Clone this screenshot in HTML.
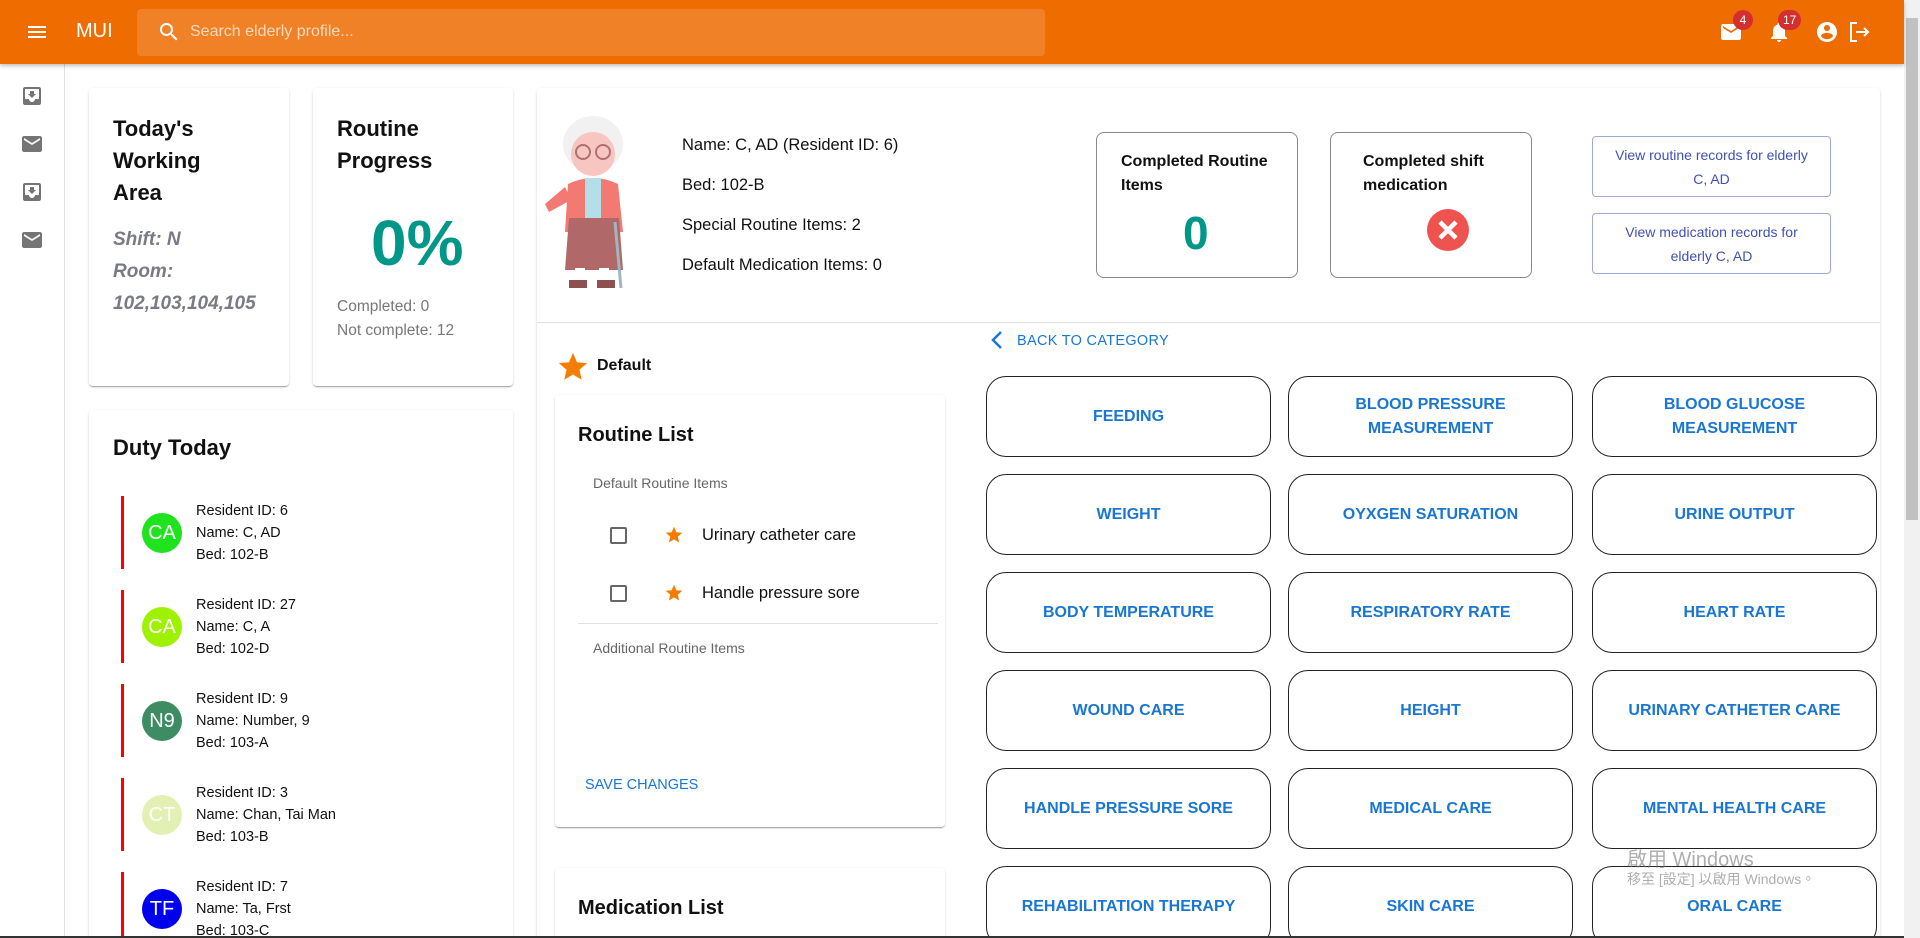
<!DOCTYPE html>
<html style="height:938px;overflow:hidden"><head><meta charset="utf-8"><style>
*{box-sizing:border-box;margin:0;padding:0}
body{width:1920px;height:938px;overflow:hidden;background:#fff;font-family:"Liberation Sans",Arial,sans-serif;position:relative;color:#111}
.abs{position:absolute}
.hdr{left:0;top:0;width:1904px;height:64px;background:#ee6c00;box-shadow:0 2px 4px rgba(0,0,0,.25);z-index:5}
.card{position:absolute;background:#fff;border-radius:4px;box-shadow:0 2px 1px -1px rgba(0,0,0,.2),0 1px 1px rgba(0,0,0,.14),0 1px 3px rgba(0,0,0,.12)}
.t{position:absolute;white-space:nowrap}
.cat{position:absolute;width:285px;height:81px;border:1px solid #222;border-radius:20px;display:flex;align-items:center;justify-content:center;text-align:center;color:#1976d2;font-weight:bold;font-size:16px;line-height:24px}
.duty{position:absolute;left:121px;width:300px;height:73px;border-left:3px solid #f00}
.av{position:absolute;left:18px;top:17px;width:40px;height:40px;border-radius:50%;color:#fff;font-size:20px;display:flex;align-items:center;justify-content:center}
.dt{position:absolute;left:72px;top:4px;font-size:14.5px;line-height:22px}
.badge{position:absolute;background:#d32f2f;color:#fff;border-radius:10px;font-size:12px;height:20px;min-width:20px;text-align:center;line-height:20px;padding:0 5px}
.btn2{position:absolute;left:1592px;width:239px;border:1px solid rgba(63,81,181,.5);border-radius:4px;color:#3f51b5;font-size:14px;line-height:24px;text-align:center;display:flex;align-items:center;justify-content:center}
</style></head><body>
<div class="abs" style="left:0;top:0;width:1920px;height:938px;overflow:hidden">

<div class="abs hdr">
  <svg class="abs" style="left:25px;top:20px" width="24" height="24" viewBox="0 0 24 24"><path fill="#fff" d="M3 18h18v-2H3v2zm0-5h18v-2H3v2zm0-7v2h18V6H3z"/></svg>
  <div class="t" style="left:76px;top:20px;color:#fff;font-size:20px">MUI</div>
  <div class="abs" style="left:137px;top:9px;width:908px;height:47px;background:rgba(255,255,255,.15);border-radius:4px"></div>
  <svg class="abs" style="left:157px;top:20px" width="24" height="24" viewBox="0 0 24 24"><path fill="#fff" d="M15.5 14h-.79l-.28-.27A6.470 6.470 0 0016 9.5 6.5 6.5 0 109.5 16c1.61 0 3.090-.59 4.230-1.570l.27.28v.79l5 4.99L20.49 19l-4.99-5zm-6 0C7.01 14 5 11.99 5 9.5S7.01 5 9.5 5 14 7.01 14 9.5 11.99 14 9.5 14z"/></svg>
  <div class="t" style="left:190px;top:23px;color:rgba(255,255,255,.7);font-size:16px">Search elderly profile...</div>
  <svg class="abs" style="left:1719px;top:20px" width="24" height="24" viewBox="0 0 24 24"><path fill="#fff" d="M20 4H4c-1.1 0-2 .9-2 2v12c0 1.1.9 2 2 2h16c1.1 0 2-.9 2-2V6c0-1.1-.9-2-2-2zm0 4l-8 5-8-5V6l8 5 8-5v2z"/></svg>
  <div class="badge" style="left:1733px;top:10px">4</div>
  <svg class="abs" style="left:1767px;top:20px" width="24" height="24" viewBox="0 0 24 24"><path fill="#fff" d="M12 22c1.1 0 2-.9 2-2h-4c0 1.1.89 2 2 2zm6-6v-5c0-3.07-1.64-5.64-4.5-6.32V4c0-.83-.67-1.5-1.5-1.5s-1.5.67-1.5 1.5v.68C7.63 5.36 6 7.92 6 11v5l-2 2v1h16v-1l-2-2z"/></svg>
  <div class="badge" style="left:1778px;top:10px">17</div>
  <svg class="abs" style="left:1815px;top:20px" width="24" height="24" viewBox="0 0 24 24"><path fill="#fff" d="M12 2C6.48 2 2 6.48 2 12s4.48 10 10 10 10-4.48 10-10S17.52 2 12 2zm0 3c1.66 0 3 1.34 3 3s-1.34 3-3 3-3-1.34-3-3 1.34-3 3-3zm0 14.2c-2.5 0-4.71-1.28-6-3.22.03-1.99 4-3.08 6-3.08 1.99 0 5.97 1.09 6 3.08-1.29 1.940-3.5 3.220-6 3.220z"/></svg>
  <svg class="abs" style="left:1847px;top:20px" width="24" height="24" viewBox="0 0 24 24" fill="none" stroke="#fff" stroke-width="2"><path d="M10 3H4v18h6"/><path d="M9 12h12M17 8l4 4-4 4"/></svg>
</div>

<div class="abs" style="left:0;top:64px;width:65px;height:874px;border-right:1px solid #e0e0e0"></div>
<svg class="abs" style="left:20px;top:84px" width="24" height="24" viewBox="0 0 24 24"><path fill="#757575" d="M19 3H4.99C3.88 3 3 3.9 3 5v14c0 1.1.88 2 1.990 2H19c1.1 0 2-.9 2-2V5c0-1.1-.9-2-2-2zm0 12h-4c0 1.66-1.35 3-3 3s-3-1.34-3-3H4.99V5H19v10zm-3-5h-2V7h-4v3H8l4 4 4-4z"/></svg>
<svg class="abs" style="left:20px;top:132px" width="24" height="24" viewBox="0 0 24 24"><path fill="#757575" d="M20 4H4c-1.1 0-2 .9-2 2v12c0 1.1.9 2 2 2h16c1.1 0 2-.9 2-2V6c0-1.1-.9-2-2-2zm0 4l-8 5-8-5V6l8 5 8-5v2z"/></svg>
<svg class="abs" style="left:20px;top:180px" width="24" height="24" viewBox="0 0 24 24"><path fill="#757575" d="M19 3H4.99C3.88 3 3 3.9 3 5v14c0 1.1.88 2 1.990 2H19c1.1 0 2-.9 2-2V5c0-1.1-.9-2-2-2zm0 12h-4c0 1.66-1.35 3-3 3s-3-1.34-3-3H4.99V5H19v10zm-3-5h-2V7h-4v3H8l4 4 4-4z"/></svg>
<svg class="abs" style="left:20px;top:228px" width="24" height="24" viewBox="0 0 24 24"><path fill="#757575" d="M20 4H4c-1.1 0-2 .9-2 2v12c0 1.1.9 2 2 2h16c1.1 0 2-.9 2-2V6c0-1.1-.9-2-2-2zm0 4l-8 5-8-5V6l8 5 8-5v2z"/></svg>

<div class="card" style="left:89px;top:88px;width:200px;height:298px">
  <div class="abs" style="left:24px;top:25px;font-size:22px;font-weight:bold;line-height:32px">Today's<br>Working<br>Area</div>
  <div class="abs" style="left:24px;top:136px;font-size:19px;font-weight:bold;font-style:italic;line-height:32px;color:#7a7a86">Shift: N<br>Room:<br>102,103,104,105</div>
</div>
<div class="card" style="left:313px;top:88px;width:200px;height:298px">
  <div class="abs" style="left:24px;top:25px;font-size:22px;font-weight:bold;line-height:32px">Routine<br>Progress</div>
  <div class="t" style="left:58px;top:118px;font-size:64px;font-weight:bold;color:#009688">0%</div>
  <div class="abs" style="left:24px;top:207px;font-size:15.5px;line-height:24px;color:#777">Completed: 0<br>Not complete: 12</div>
</div>

<div class="card" style="left:89px;top:410px;width:424px;height:540px">
  <div class="t" style="left:24px;top:25px;font-size:22px;font-weight:bold">Duty Today</div>
</div>
<div class="duty" style="top:496px"><div class="av" style="background:#1ee31e">CA</div><div class="dt">Resident ID: 6<br>Name: C, AD<br>Bed: 102-B</div></div>
<div class="duty" style="top:590px"><div class="av" style="background:#9ef200">CA</div><div class="dt">Resident ID: 27<br>Name: C, A<br>Bed: 102-D</div></div>
<div class="duty" style="top:684px"><div class="av" style="background:#3d8c63">N9</div><div class="dt">Resident ID: 9<br>Name: Number, 9<br>Bed: 103-A</div></div>
<div class="duty" style="top:778px"><div class="av" style="background:#e3f0b3">CT</div><div class="dt">Resident ID: 3<br>Name: Chan, Tai Man<br>Bed: 103-B</div></div>
<div class="duty" style="top:872px"><div class="av" style="background:#0000ee">TF</div><div class="dt">Resident ID: 7<br>Name: Ta, Frst<br>Bed: 103-C</div></div>

<div class="card" style="left:537px;top:88px;width:1343px;height:870px"></div>
<svg class="abs" style="left:543px;top:112px" width="100" height="180" viewBox="0 0 100 180">
  <ellipse cx="50" cy="32" rx="30" ry="28" fill="#f1f1f1"/>
  <ellipse cx="50" cy="42" rx="22" ry="22" fill="#f7c6c0"/>
  <circle cx="40" cy="40" r="7" fill="none" stroke="#b07070" stroke-width="2"/>
  <circle cx="60" cy="40" r="7" fill="none" stroke="#b07070" stroke-width="2"/>
  <path d="M25 72 Q50 60 75 72 L80 120 L22 120 Z" fill="#f27a73"/>
  <rect x="42" y="66" width="16" height="40" fill="#b3dfe8"/>
  <path d="M22 75 L2 92 L6 100 L28 88Z" fill="#f27a73"/>
  <path d="M26 106 L76 106 L80 158 L22 158 Z" fill="#b06868"/>
  <line x1="72" y1="110" x2="78" y2="176" stroke="#9fb6c1" stroke-width="3"/>
  <rect x="32" y="156" width="10" height="12" fill="#fff"/><rect x="56" y="156" width="10" height="12" fill="#fff"/>
  <path d="M26 168h18v8H26zM54 168h18v8H54z" fill="#8c5050"/>
</svg>
<div class="abs" style="left:682px;top:125px;font-size:16.5px;line-height:40px">Name: C, AD (Resident ID: 6)<br>Bed: 102-B<br>Special Routine Items: 2<br>Default Medication Items: 0</div>

<div class="abs" style="left:1096px;top:132px;width:202px;height:146px;border:1px solid #888;border-radius:8px">
  <div class="abs" style="left:24px;top:17px;font-size:16px;font-weight:bold;line-height:24px">Completed Routine<br>Items</div>
  <div class="t" style="left:86px;top:73px;font-size:46px;font-weight:bold;color:#009688">0</div>
</div>
<div class="abs" style="left:1330px;top:132px;width:202px;height:146px;border:1px solid #888;border-radius:8px">
  <div class="abs" style="left:32px;top:17px;font-size:16px;font-weight:bold;line-height:24px">Completed shift<br>medication</div>
  <svg class="abs" style="left:96px;top:76px" width="42" height="42" viewBox="0 0 42 42"><circle cx="21" cy="21" r="21" fill="#ef5350"/><path d="M13 13L29 29M29 13L13 29" stroke="#fff" stroke-width="4.5"/></svg>
</div>
<div class="btn2" style="top:136px;height:61px">View routine records for elderly<br>C, AD</div>
<div class="btn2" style="top:213px;height:61px">View medication records for<br>elderly C, AD</div>

<div class="abs" style="left:537px;top:322px;width:1343px;height:1px;background:#e0e0e0"></div>

<svg class="abs" style="left:988px;top:328px" width="18" height="24" viewBox="0 0 18 24"><path d="M13 4L5 12l8 8" fill="none" stroke="#1976d2" stroke-width="2.5"/></svg>
<div class="t" style="left:1017px;top:333px;font-size:14.5px;color:#1976d2;letter-spacing:.3px">BACK TO CATEGORY</div>

<svg class="abs" style="left:556px;top:350px" width="34" height="34" viewBox="0 0 24 24"><path fill="#f57c00" d="M12 17.27L18.18 21l-1.64-7.03L22 9.24l-7.19-.61L12 2 9.19 8.63 2 9.24l5.46 4.73L5.82 21z"/></svg>
<div class="t" style="left:597px;top:357px;font-size:16px;font-weight:bold">Default</div>

<div class="card" style="left:555px;top:395px;width:390px;height:432px">
  <div class="t" style="left:23px;top:29px;font-size:20px;font-weight:bold">Routine List</div>
  <div class="t" style="left:38px;top:80px;font-size:14px;color:#666">Default Routine Items</div>
  <div class="abs" style="left:55px;top:132px;width:17px;height:17px;border:2px solid #666;border-radius:2px"></div>
  <svg class="abs" style="left:109px;top:130px" width="20" height="20" viewBox="0 0 24 24"><path fill="#f57c00" d="M12 17.27L18.18 21l-1.64-7.03L22 9.24l-7.19-.61L12 2 9.19 8.63 2 9.24l5.46 4.73L5.82 21z"/></svg>
  <div class="t" style="left:147px;top:131px;font-size:16.5px">Urinary catheter care</div>
  <div class="abs" style="left:55px;top:190px;width:17px;height:17px;border:2px solid #666;border-radius:2px"></div>
  <svg class="abs" style="left:109px;top:188px" width="20" height="20" viewBox="0 0 24 24"><path fill="#f57c00" d="M12 17.27L18.18 21l-1.64-7.03L22 9.24l-7.19-.61L12 2 9.19 8.63 2 9.24l5.46 4.73L5.82 21z"/></svg>
  <div class="t" style="left:147px;top:189px;font-size:16.5px">Handle pressure sore</div>
  <div class="abs" style="left:23px;top:228px;width:360px;height:1px;background:#e0e0e0"></div>
  <div class="t" style="left:38px;top:245px;font-size:14px;color:#666">Additional Routine Items</div>
  <div class="t" style="left:30px;top:382px;font-size:14.5px;color:#1976d2">SAVE CHANGES</div>
</div>
<div class="card" style="left:555px;top:868px;width:390px;height:100px">
  <div class="t" style="left:23px;top:29px;font-size:20px;font-weight:bold">Medication List</div>
</div>

<div class="cat" style="left:986px;top:376px">FEEDING</div>
<div class="cat" style="left:1288px;top:376px">BLOOD PRESSURE<br>MEASUREMENT</div>
<div class="cat" style="left:1592px;top:376px">BLOOD GLUCOSE<br>MEASUREMENT</div>
<div class="cat" style="left:986px;top:474px">WEIGHT</div>
<div class="cat" style="left:1288px;top:474px">OYXGEN SATURATION</div>
<div class="cat" style="left:1592px;top:474px">URINE OUTPUT</div>
<div class="cat" style="left:986px;top:572px">BODY TEMPERATURE</div>
<div class="cat" style="left:1288px;top:572px">RESPIRATORY RATE</div>
<div class="cat" style="left:1592px;top:572px">HEART RATE</div>
<div class="cat" style="left:986px;top:670px">WOUND CARE</div>
<div class="cat" style="left:1288px;top:670px">HEIGHT</div>
<div class="cat" style="left:1592px;top:670px">URINARY CATHETER CARE</div>
<div class="cat" style="left:986px;top:768px">HANDLE PRESSURE SORE</div>
<div class="cat" style="left:1288px;top:768px">MEDICAL CARE</div>
<div class="cat" style="left:1592px;top:768px">MENTAL HEALTH CARE</div>
<div class="cat" style="left:986px;top:866px">REHABILITATION THERAPY</div>
<div class="cat" style="left:1288px;top:866px">SKIN CARE</div>
<div class="cat" style="left:1592px;top:866px">ORAL CARE</div>

<div class="t" style="left:1627px;top:843px;font-size:20px;color:rgba(120,120,120,.6);font-family:'Liberation Sans','Noto Sans CJK TC',sans-serif">啟用 Windows</div>
<div class="t" style="left:1627px;top:869px;font-size:14px;color:rgba(120,120,120,.6);font-family:'Liberation Sans','Noto Sans CJK TC',sans-serif">移至 [設定] 以啟用 Windows。</div>

<div class="abs" style="left:1904px;top:0;width:16px;height:938px;background:#f1f1f1"></div>
<div class="abs" style="left:1906px;top:18px;width:12px;height:502px;background:#c1c1c1"></div>
<div class="abs" style="left:0;top:936px;width:1904px;height:2px;background:#333"></div>
</div>
</body></html>
